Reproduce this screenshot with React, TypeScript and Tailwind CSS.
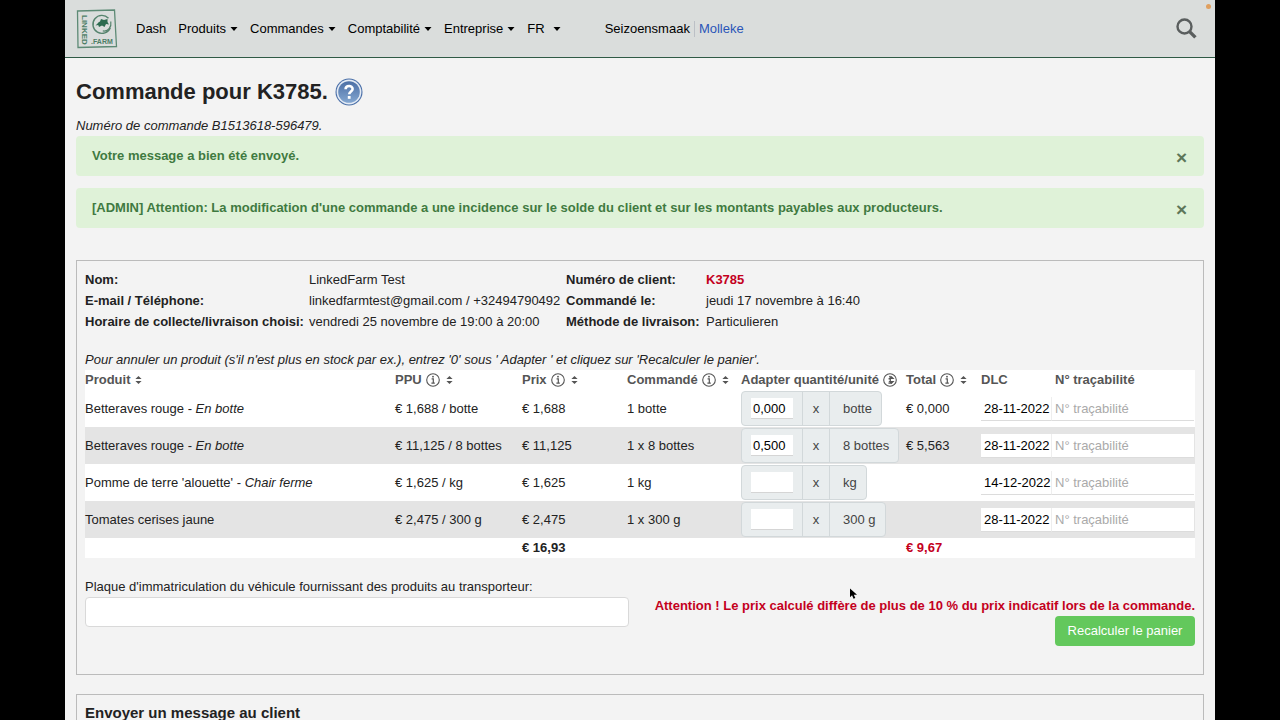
import { useState } from "react";
import type { ReactNode } from "react";

const menus = ["Produits", "Commandes", "Comptabilité", "Entreprise"];

const rows = [
  { name: "Betteraves rouge", detail: "En botte", ppu: "€ 1,688 / botte", price: "€ 1,688", ordered: "1 botte", qty: "0,000", unit: "botte", total: "€ 0,000", dlc: "28-11-2022" },
  { name: "Betteraves rouge", detail: "En botte", ppu: "€ 11,125 / 8 bottes", price: "€ 11,125", ordered: "1 x 8 bottes", qty: "0,500", unit: "8 bottes", total: "€ 5,563", dlc: "28-11-2022" },
  { name: "Pomme de terre 'alouette'", detail: "Chair ferme", ppu: "€ 1,625 / kg", price: "€ 1,625", ordered: "1 kg", qty: "", unit: "kg", total: "", dlc: "14-12-2022" },
  { name: "Tomates cerises jaune", detail: "", ppu: "€ 2,475 / 300 g", price: "€ 2,475", ordered: "1 x 300 g", qty: "", unit: "300 g", total: "", dlc: "28-11-2022" },
];

const Caret = () => (
  <svg width="8" height="4" viewBox="0 0 8 4" className="mt-px" aria-hidden="true">
    <path d="M0.5 0h7L4 4z" fill="currentColor" />
  </svg>
);

const InfoIcon = () => (
  <svg width="14" height="14" viewBox="0 0 14 14" fill="none" stroke="#555" aria-hidden="true">
    <circle cx="7" cy="7" r="6.3" strokeWidth="1.1" />
    <path d="M5.6 5.9h1.7v4M5.4 10.1h3.4" strokeWidth="1.2" />
    <circle cx="7" cy="3.7" r="0.9" fill="#555" stroke="none" />
  </svg>
);

const SortIcon = () => (
  <svg width="7" height="8" viewBox="0 0 7 8" fill="#555" aria-hidden="true">
    <path d="M0.4 3.1L3.5 0l3.1 3.1zM0.4 4.9h6.2L3.5 8z" />
  </svg>
);

const Logo = () => (
  <svg width="42" height="40" viewBox="0 0 42 40" aria-hidden="true">
    <path d="M1.5 2L38.5 1L40.5 37.5L2 38.5Z" fill="none" stroke="#5d8a75" strokeWidth="1.3" />
    <path d="M32.5 9.2a9 9 0 1 0 1.8 9.5" fill="none" stroke="#55836d" strokeWidth="1.4" />
    <path d="M34.8 12.5c.8 5-2 10.4-8 9.4" fill="none" stroke="#55836d" strokeWidth="1.2" />
    <path d="M19.5 16.5c1.5-1 2.500-3.200 4.500-4l1-2.500 3 1 3.500-1v3l1.500 2.500-3-.5-1.500 3-2.500-1.500-3 1.500-.8-2z" fill="#2c6b4f" />
    <g fill="#4d7d66" fontWeight="700">
      <text x="6" y="-6" fontSize="8" transform="rotate(90)">
        LINKED
      </text>
      <text x="15" y="35" fontSize="7">
        .FARM
      </text>
    </g>
  </svg>
);

const HelpIcon = () => (
  <svg width="28" height="28" viewBox="0 0 28 28" aria-hidden="true">
    <defs>
      <linearGradient id="help" x1="0" y1="0" x2="0" y2="1">
        <stop offset="0" stopColor="#4c6fa5" />
        <stop offset="1" stopColor="#83a6d0" />
      </linearGradient>
    </defs>
    <circle cx="14" cy="14" r="13.5" fill="#4a6fa8" />
    <circle cx="14" cy="14" r="12.4" fill="#e4ebf4" />
    <circle cx="14" cy="14" r="10.8" fill="url(#help)" />
    <path d="M10.6 11.2c0-4.400 7-4.200 7-.3 0 2.500-3.400 2.600-3.400 5.400" fill="none" stroke="#fff" strokeWidth="2.6" />
    <rect x="12.8" y="18" width="2.8" height="2.8" fill="#fff" />
  </svg>
);

const Alert = ({ children }: { children: ReactNode }) => {
  const [open, setOpen] = useState(true);
  if (!open) return null;

  return (
    <div role="alert" className="mb-3 flex h-10 items-center justify-between rounded-sm bg-[#dff2d8] pr-[17px] pl-4 font-bold text-[#3f7a41]">
      <p>{children}</p>
      <button type="button" aria-label="Fermer" onClick={() => setOpen(false)} className="mt-1 text-[19px] leading-5 text-[#5d7659]">
        ×
      </button>
    </div>
  );
};

const App = () => {
  return (
    <div className="min-h-screen bg-black px-[65px] font-['Liberation_Sans',Arial,sans-serif] text-[13px] leading-5 text-[#222]">
      <div className="relative min-h-screen bg-[#f3f3f3]">
        <span className="absolute top-1 right-1 size-[5px] rounded-full bg-[#e0a060]" />
        <header className="flex h-[58px] items-center border-b border-[#2f5a45] bg-[#dadddc] pr-[18px] pl-[11px] text-black">
          <a href="#" aria-label="Linked.Farm">
            <Logo />
          </a>
          <nav className="ml-[18px] flex items-center gap-3">
            <a href="#">Dash</a>
            {menus.map((menu) => (
              <button key={menu} type="button" className="flex items-center gap-1">
                {menu}
                <Caret />
              </button>
            ))}
            <button type="button" className="flex items-center gap-2">
              FR
              <Caret />
            </button>
          </nav>
          <div className="ml-11 flex items-center gap-1">
            <span>Seizoensmaak</span>
            <span className="h-4 w-px bg-[#bcc0c6]" />
            <a href="#" className="text-[#2a55b8]">
              Molleke
            </a>
          </div>
          <button type="button" aria-label="Rechercher" className="ml-auto">
            <svg width="21" height="21" viewBox="0 0 21 21" fill="none" stroke="#5a5e5e" aria-hidden="true">
              <circle cx="8.5" cy="8.5" r="7" strokeWidth="2.4" />
              <path d="M13.6 13.6l5.8 5.8" strokeWidth="3.4" />
            </svg>
          </button>
        </header>

        <main className="px-[11px] pt-5">
          <div className="flex h-7 items-center gap-[7px]">
            <h1 className="text-[22px] leading-7 font-bold">Commande pour K3785.</h1>
            <button type="button" aria-label="Aide">
              <HelpIcon />
            </button>
          </div>
          <p className="mt-[10px] italic">Numéro de commande B1513618-596479.</p>

          <Alert>Votre message a bien été envoyé.</Alert>
          <Alert>
            [ADMIN] Attention: La modification d'une commande a une incidence sur le solde du client et sur les
            montants payables aux producteurs.
          </Alert>

          <section className="mt-8 border border-[#bbb] px-2 pt-2 pb-7">
            <table className="table-fixed text-left leading-[21px]">
              <colgroup>
                <col className="w-56" />
                <col className="w-[257px]" />
                <col className="w-[140px]" />
                <col className="w-[200px]" />
              </colgroup>
              <tbody>
                <tr>
                  <th scope="row">Nom:</th>
                  <td>LinkedFarm Test</td>
                  <th scope="row">Numéro de client:</th>
                  <td className="font-bold text-[#c4001d]">K3785</td>
                </tr>
                <tr>
                  <th scope="row">E-mail / Téléphone:</th>
                  <td>linkedfarmtest@gmail.com / +32494790492</td>
                  <th scope="row">Commandé le:</th>
                  <td>jeudi 17 novembre à 16:40</td>
                </tr>
                <tr>
                  <th scope="row">Horaire de collecte/livraison choisi:</th>
                  <td>vendredi 25 novembre de 19:00 à 20:00</td>
                  <th scope="row">Méthode de livraison:</th>
                  <td>Particulieren</td>
                </tr>
              </tbody>
            </table>

            <p className="mt-[18px] italic">
              Pour annuler un produit (s'il n'est plus en stock par ex.), entrez '0' sous ' Adapter ' et cliquez sur
              'Recalculer le panier'.
            </p>
            <table className="w-full table-fixed bg-white text-left whitespace-nowrap">
              <colgroup>
                <col />
                <col className="w-[127px]" />
                <col className="w-[105px]" />
                <col className="w-[114px]" />
                <col className="w-[165px]" />
                <col className="w-[75px]" />
                <col className="w-[70px]" />
                <col className="w-36" />
              </colgroup>
              <thead className="text-[#555]">
                <tr className="h-5">
                  <th scope="col">
                    <span className="flex items-center gap-1">
                      Produit <SortIcon />
                    </span>
                  </th>
                  {["PPU", "Prix", "Commandé"].map((label) => (
                    <th key={label} scope="col">
                      <span className="flex items-center gap-1">
                        {label} <InfoIcon />
                        <span className="ml-0.5">
                          <SortIcon />
                        </span>
                      </span>
                    </th>
                  ))}
                  <th scope="col">
                    <span className="flex items-center gap-1">
                      Adapter quantité/unité
                      <span className="relative">
                        <InfoIcon />
                        <span className="absolute top-[3px] left-[5px]">
                          <SortIcon />
                        </span>
                      </span>
                    </span>
                  </th>
                  <th scope="col">
                    <span className="flex items-center gap-1">
                      Total <InfoIcon />
                      <span className="ml-0.5">
                        <SortIcon />
                      </span>
                    </span>
                  </th>
                  <th scope="col">DLC</th>
                  <th scope="col" className="pl-1">
                    N° traçabilité
                  </th>
                </tr>
              </thead>
              <tbody>
                {rows.map((row, i) => (
                  <tr key={i} className="h-[37px] even:bg-[#e4e4e4]">
                    <td>
                      {row.name}
                      {row.detail && (
                        <>
                          {" "}
                          - <em>{row.detail}</em>
                        </>
                      )}
                    </td>
                    <td>{row.ppu}</td>
                    <td>{row.price}</td>
                    <td>{row.ordered}</td>
                    <td>
                      <div className="flex h-[35px] w-fit items-stretch divide-x divide-[#d2d8da] rounded-sm border border-[#d2d8da] bg-[#e9edee] text-[#444]">
                        <span className="flex w-[61px] items-center justify-center">
                          <input
                            aria-label={`Quantité ${i + 1}`}
                            defaultValue={row.qty}
                            className="h-[21px] w-[42px] border-b border-[#d5d5d5] bg-white pl-0.5 text-black"
                          />
                        </span>
                        <span className="flex w-[27px] items-center justify-center">x</span>
                        <span className="flex items-center pr-[9px] pl-[13px]">{row.unit}</span>
                      </div>
                    </td>
                    <td>{row.total}</td>
                    <td>
                      <input
                        aria-label={`DLC ${i + 1}`}
                        defaultValue={row.dlc}
                        className="block h-6 w-full border-b border-[#dcdcdc] bg-white pl-[3px] text-black"
                      />
                    </td>
                    <td className="pr-px">
                      <input
                        aria-label={`N° traçabilité ${i + 1}`}
                        placeholder="N° traçabilité"
                        className="block h-6 w-full border-b border-l border-[#dcdcdc] border-l-[#eee] bg-white pl-[3px] placeholder:text-[#aaa]"
                      />
                    </td>
                  </tr>
                ))}
              </tbody>
              <tfoot className="font-bold">
                <tr className="h-5">
                  <td colSpan={2} />
                  <td>€ 16,93</td>
                  <td colSpan={2} />
                  <td className="text-[#c4001d]">€ 9,67</td>
                  <td colSpan={2} />
                </tr>
              </tfoot>
            </table>

            <div className="mt-[19px] flex justify-between">
              <div className="w-[49%]">
                <label htmlFor="plate" className="block">
                  Plaque d'immatriculation du véhicule fournissant des produits au transporteur:
                </label>
                <input id="plate" className="block h-[30px] w-full rounded-sm border border-[#d9d9d9] bg-white px-3" />
              </div>
              <div className="flex flex-col items-end pt-[19px]">
                <p className="font-bold text-[#c4001d]">
                  Attention ! Le prix calculé diffère de plus de 10 % du prix indicatif lors de la commande.
                </p>
                <button type="button" className="relative h-[30px] w-[140px] rounded-sm bg-[#63c85c] text-white">
                  Recalculer le panier
                  <svg width="7" height="12" viewBox="0 0 12 19" className="absolute -top-7 -left-[205px]" aria-hidden="true">
                    <path d="M0 0v15l3.5-3.3 2.6 6.1 3-1.3-2.6-5.9H12z" fill="#000" />
                  </svg>
                </button>
              </div>
            </div>
          </section>

          <section className="mt-[19px] border border-[#bbb] px-2 pt-2 pb-10">
            <h2 className="text-[15px] leading-5 font-bold">Envoyer un message au client</h2>
          </section>
        </main>
      </div>
    </div>
  );
};

export default App;
